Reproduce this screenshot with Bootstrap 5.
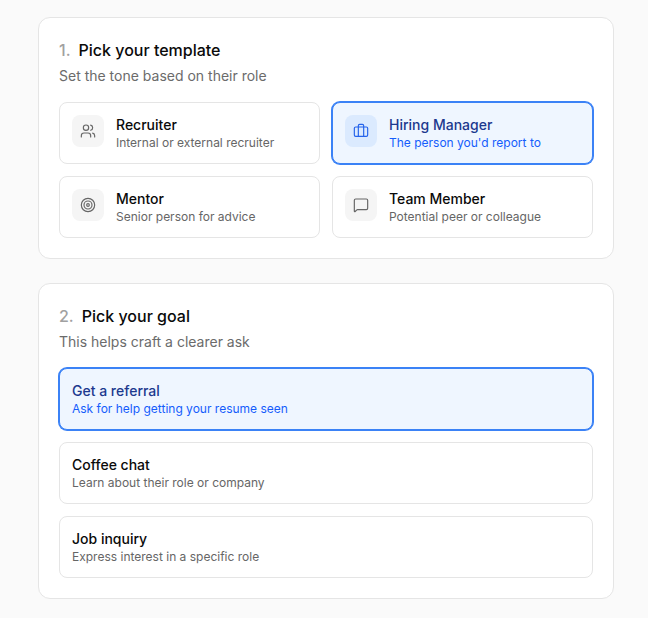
<!DOCTYPE html>
<html lang="en">
<head>
<meta charset="utf-8">
<meta name="viewport" content="width=device-width, initial-scale=1">
<title>Template and goal</title>
<link href="https://cdn.jsdelivr.net/npm/bootstrap@5.3.0/dist/css/bootstrap.min.css" rel="stylesheet">
<style>
  body { font-family: Inter, "Liberation Sans", sans-serif; background: #fafafa; color: #0a0a0a; }
  .page { padding: 17px 34px 17px 38px; }
  .step { padding: 20px; border: 1px solid #e5e5e5; border-radius: 12px; background: #fff; }
  .step-title { font-size: 16px; line-height: 24px; font-weight: 500; }
  .step-number { color: #a1a1a1; }
  .step-hint { font-size: 14px; line-height: 20px; color: #6b6b6b; }
  .options { gap: 12px; }
  .two-up { grid-template-columns: 1fr 1fr; }
  .option { gap: 12px; padding: 12px; border: 1px solid #e5e5e5; border-radius: 8px; background: #fff; color: #0a0a0a; }
  .option-icon { width: 32px; height: 32px; border-radius: 8px; background: #f5f5f5; color: #666; }
  .option-icon svg { width: 16px; height: 16px; fill: none; stroke: currentColor; stroke-width: 1.75; stroke-linecap: round; stroke-linejoin: round; }
  .option-name { font-size: 14px; line-height: 20px; font-weight: 500; }
  .option-note { font-size: 12px; line-height: 16px; color: #666; }
  .option[aria-pressed="true"] { background: #eff6ff; border-color: #3b82f6; box-shadow: 0 0 0 1px #3b82f6; color: #1c398e; }
  .option[aria-pressed="true"] .option-icon { background: #dbeafe; color: #2563eb; }
  .option[aria-pressed="true"] .option-note { color: #155dfc; }
</style>
</head>
<body>
<main class="page d-flex flex-column gap-4">
  <section class="step" aria-labelledby="template-title">
    <h2 class="step-title d-flex gap-2 mb-1" id="template-title"><span class="step-number">1.</span><span>Pick your template</span></h2>
    <p class="step-hint mb-3">Set the tone based on their role</p>
    <div class="options two-up d-grid">
      <button type="button" class="option d-flex align-items-start text-start" aria-pressed="false">
        <span class="option-icon d-flex align-items-center justify-content-center flex-shrink-0">
          <svg viewBox="0 0 24 24" aria-hidden="true"><path d="M16 21v-2a4 4 0 0 0-4-4H6a4 4 0 0 0-4 4v2"/><path d="M16 3.128a4 4 0 0 1 0 7.744"/><path d="M22 21v-2a4 4 0 0 0-3-3.87"/><circle cx="9" cy="7" r="4"/></svg>
        </span>
        <span class="d-flex flex-column"><span class="option-name">Recruiter</span><span class="option-note">Internal or external recruiter</span></span>
      </button>
      <button type="button" class="option d-flex align-items-start text-start" aria-pressed="true">
        <span class="option-icon d-flex align-items-center justify-content-center flex-shrink-0">
          <svg viewBox="0 0 24 24" aria-hidden="true"><path d="M16 20V4a2 2 0 0 0-2-2h-4a2 2 0 0 0-2 2v16"/><rect width="20" height="14" x="2" y="6" rx="2"/></svg>
        </span>
        <span class="d-flex flex-column"><span class="option-name">Hiring Manager</span><span class="option-note">The person you'd report to</span></span>
      </button>
      <button type="button" class="option d-flex align-items-start text-start" aria-pressed="false">
        <span class="option-icon d-flex align-items-center justify-content-center flex-shrink-0">
          <svg viewBox="0 0 24 24" aria-hidden="true"><circle cx="12" cy="12" r="10"/><circle cx="12" cy="12" r="6"/><circle cx="12" cy="12" r="2"/></svg>
        </span>
        <span class="d-flex flex-column"><span class="option-name">Mentor</span><span class="option-note">Senior person for advice</span></span>
      </button>
      <button type="button" class="option d-flex align-items-start text-start" aria-pressed="false">
        <span class="option-icon d-flex align-items-center justify-content-center flex-shrink-0">
          <svg viewBox="0 0 24 24" aria-hidden="true"><path d="M22 17a2 2 0 0 1-2 2H6.828a2 2 0 0 0-1.414.586l-2.202 2.202A.71.71 0 0 1 2 21.286V5a2 2 0 0 1 2-2h16a2 2 0 0 1 2 2z"/></svg>
        </span>
        <span class="d-flex flex-column"><span class="option-name">Team Member</span><span class="option-note">Potential peer or colleague</span></span>
      </button>
    </div>
  </section>

  <section class="step" aria-labelledby="goal-title">
    <h2 class="step-title d-flex gap-2 mb-1" id="goal-title"><span class="step-number">2.</span><span>Pick your goal</span></h2>
    <p class="step-hint mb-3">This helps craft a clearer ask</p>
    <div class="options d-grid">
      <button type="button" class="option d-flex flex-column gap-0 text-start" aria-pressed="true">
        <span class="option-name">Get a referral</span><span class="option-note">Ask for help getting your resume seen</span>
      </button>
      <button type="button" class="option d-flex flex-column gap-0 text-start" aria-pressed="false">
        <span class="option-name">Coffee chat</span><span class="option-note">Learn about their role or company</span>
      </button>
      <button type="button" class="option d-flex flex-column gap-0 text-start" aria-pressed="false">
        <span class="option-name">Job inquiry</span><span class="option-note">Express interest in a specific role</span>
      </button>
    </div>
  </section>
</main>
<script src="https://cdn.jsdelivr.net/npm/bootstrap@5.3.0/dist/js/bootstrap.bundle.min.js"></script>
</body>
</html>
